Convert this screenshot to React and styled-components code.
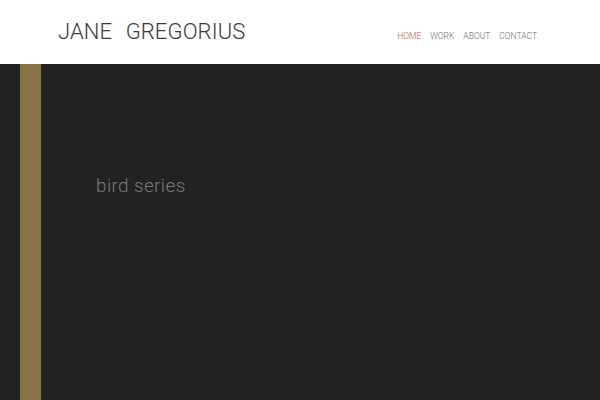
import React from "react";
import styled, { createGlobalStyle } from "styled-components";

const Global = createGlobalStyle`
  html, body { margin: 0; padding: 0; height: 100%; }
  body { background: #222222; font-family: "Roboto", sans-serif; }
  #root { height: 100%; }
`;

const Page = styled.div`
  display: flex;
  flex-direction: column;
  height: 400px;
  width: 600px;
  overflow: hidden;
`;

const Header = styled.header`
  height: 64px;
  background: #ffffff;
  display: flex;
  align-items: center;
  justify-content: space-between;
  padding: 0 63px 0 58px;
  box-sizing: border-box;
  flex-shrink: 0;
`;

const Logo = styled.div`
  font-family: "Roboto", sans-serif;
  font-weight: 300;
  font-size: 22px;
  letter-spacing: 0.1px;
  color: #3a3a3a;
  word-spacing: 8px;
  margin-top: -1px;
`;

const Nav = styled.nav`
  display: flex;
  gap: 9px;
  margin-top: 8px;
`;

const NavLink = styled.a`
  font-family: "Roboto", sans-serif;
  font-weight: 300;
  font-size: 8.5px;
  letter-spacing: 0;
  text-transform: uppercase;
  color: ${(p) => (p.$active ? "#c0594a" : "#6f6f6f")};
  text-decoration: none;
`;

const Main = styled.main`
  flex: 1;
  display: flex;
  background: #222222;
  padding-left: 20px;
`;

const Stripe = styled.div`
  width: 21px;
  background: #857346;
  flex-shrink: 0;
`;

const Content = styled.div`
  padding: 110px 0 0 55px;
`;

const Title = styled.h1`
  margin: 0;
  font-family: "Roboto", sans-serif;
  font-weight: 300;
  font-size: 19px;
  color: #7a7a7a;
  letter-spacing: 0.35px;
`;

export default function App() {
  return (
    <>
      <Global />
      <Page>
        <Header>
          <Logo>JANE GREGORIUS</Logo>
          <Nav>
            <NavLink $active>Home</NavLink>
            <NavLink>Work</NavLink>
            <NavLink>About</NavLink>
            <NavLink>Contact</NavLink>
          </Nav>
        </Header>
        <Main>
          <Stripe />
          <Content>
            <Title>bird series</Title>
          </Content>
        </Main>
      </Page>
    </>
  );
}
